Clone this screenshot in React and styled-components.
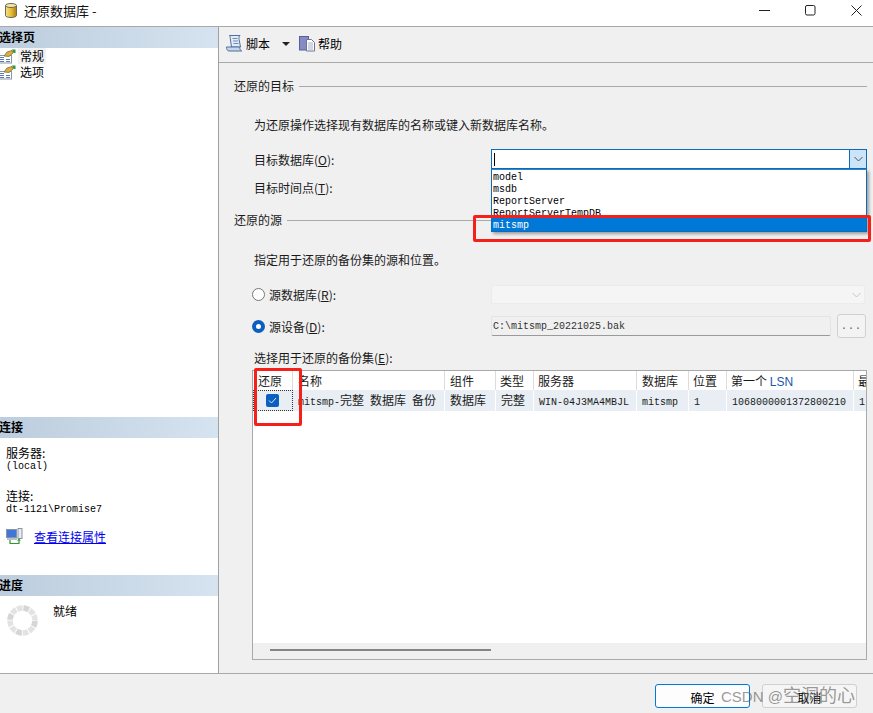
import React from "react";
import styled, { createGlobalStyle } from "styled-components";

const Global = createGlobalStyle`
  html, body { margin: 0; padding: 0; background: #f0f0f0; }
  body { font-family: "Noto Sans CJK SC", "Liberation Sans", sans-serif; font-size: 12px; color: #000; }
`;
const Win = styled.div`
  position: relative; width: 873px; height: 713px; overflow: hidden;
  display: flex; flex-direction: column; background: #f0f0f0;
`;
const TitleBar = styled.div`
  height: 27px; box-sizing: border-box; background: #fff; border-bottom: 1px solid #a9a9a9;
  display: flex; align-items: center; padding: 0 0 6px 5px; flex: none;
`;
const TitleText = styled.span`font-size: 13px; margin-left: 7px; color: #111; line-height: 16px; padding-top: 1px;`;
const WinBtns = styled.div`
  margin-left: auto; display: flex; align-items: center; gap: 35px; padding-right: 11px;
`;
const Main = styled.div`flex: 1; display: flex; min-height: 0;`;
const Side = styled.aside`
  width: 219px; box-sizing: border-box; flex: none; background: #fff; border-right: 1px solid #a0a0a0;
  display: flex; flex-direction: column;
`;
const SideHead = styled.div`
  height: 21px; flex: none; background: linear-gradient(90deg, #bccddd, #d6e3f0);
  font-weight: 700; font-size: 12px; line-height: 19px; text-indent: -1px;
`;
const Pages = styled.div`height: 369px; box-sizing: border-box; flex: none;`;
const PageRow = styled.div`display: flex; align-items: center; height: 16px; gap: 2px; line-height: 16px;`;
const PageLabel = styled.span`padding: 0 2px; background: ${p => p.$sel ? "#f2f2f2" : "transparent"};`;
const ConnBody = styled.div`height: 137px; box-sizing: border-box; flex: none; padding: 8px 0 0 6px; display: flex; flex-direction: column;`;
const Label = styled.div`height: 13px; line-height: 13px;`;
const MonoLabel = styled.div`height: 13px; line-height: 15px; font-family: "Liberation Mono", monospace; font-size: 10px;`;
const Mono = styled.span`font-family: "Liberation Mono", monospace; font-size: 10px;`;
const ConnBlock = styled.div`display: flex; flex-direction: column; height: 26px; margin-bottom: ${p => p.$mb}px;`;
const LinkRow = styled.div`display: flex; align-items: center; gap: 11px;`;
const Link = styled.a`color: #0000ee; text-decoration: underline; font-size: 12px;`;
const ProgressBody = styled.div`flex: 1; display: flex; padding: 6px 0 0 7px; gap: 15px;`;
const SpinnerBox = styled.div`margin-top: 3px; height: 31px;`;

const Content = styled.div`flex: 1; min-width: 0; display: flex; flex-direction: column;`;
const Toolbar = styled.div`
  height: 36px; box-sizing: border-box; flex: none; border-bottom: 1px solid #a9a9a9; display: flex; align-items: center; padding: 0 0 3px 7px;
`;
const ToolItem = styled.div`display: flex; align-items: center; gap: 3px;`;
const Caret = styled.span`
  width: 0; height: 0; border-left: 4px solid transparent; border-right: 4px solid transparent;
  border-top: 4px solid #222; margin: 2px 9px 0 12px;
`;
const Form = styled.div`flex: 1; padding: 14px 6px 0 15px; display: flex; flex-direction: column; min-height: 0;`;
const Section = styled.div`display: flex; align-items: center; gap: 5px; height: 18px; color: #1a1a1a; margin-top: ${p => p.$mt || 0}px;`;
const SectionTitle = styled.span`margin-bottom: 2px;`;
const Rule = styled.div`flex: 1; height: 1px; background: #a9a9a9;`;
const Desc = styled.div`margin: ${p => p.$mt}px 0 0 20px; height: 16px; line-height: 16px; color: #1a1a1a;`;
const FormRow = styled.div`
  display: flex; align-items: center; height: ${p => p.$h}px; margin-top: ${p => p.$mt}px; padding-left: 20px;
`;
const FieldLabel = styled.div`width: 237px; flex: none; color: #1a1a1a;`;
const RadioLabel = styled.div`
  width: 239px; flex: none; display: flex; align-items: center; gap: 4px; color: #1a1a1a; margin-left: -2px;
`;
const Radio = styled.span`
  width: 13px; height: 13px; border-radius: 50%; box-sizing: border-box; flex: none; background: #fff;
  border: ${p => p.$on ? "4px solid #0a5fc0" : "1px solid #777"};
`;
const ComboWrap = styled.div`position: relative; flex: 1; height: 20px;`;
const Combo = styled.div`
  height: 20px; box-sizing: border-box; border: 1px solid #0d6cb8; background: #fff; display: flex;
`;
const CaretLine = styled.span`width: 1px; height: 13px; background: #000; margin: 3px 0 0 2px;`;
const ComboBtn = styled.span`
  margin-left: auto; width: 16px; background: #cce4f7; border-left: 1px solid #0d6cb8;
  display: flex; align-items: center; justify-content: center;
`;
const DropList = styled.div`
  position: absolute; left: 0; right: 0; top: 20px; height: 63px; box-sizing: border-box; z-index: 3; background: #fff; padding-top: 2px;
  border: 1px solid #0d6cb8; border-top: 1px solid #2f86cc; box-shadow: 2px 2px 3px rgba(0,0,0,.35); overflow: hidden;
`;
const DropItem = styled.div`
  height: 12px; line-height: 12px; padding-left: 1px; font-family: "Liberation Mono", monospace; font-size: 10px; color: #000;
`;
const DropSel = styled.div`
  position: absolute; left: 0; right: 0; bottom: 0; height: 13px; line-height: 15px; padding-left: 1px;
  background: #0078d7; color: #fff; font-family: "Liberation Mono", monospace; font-size: 10px;
`;
const DisabledSelect = styled.div`
  width: 374px; height: 19px; box-sizing: border-box; background: #f5f5f5; border: 1px solid #ececec; border-radius: 2px;
  display: flex; align-items: center; justify-content: flex-end; padding-right: 3px;
`;
const PathInput = styled.div`
  width: 340px; height: 20px; box-sizing: border-box; background: #f0f0f0; border: 1px solid #e4e4e4; border-bottom: 1px solid #9a9a9a;
  border-radius: 2px; padding-left: 1px; line-height: 19px; font-family: "Liberation Mono", monospace; font-size: 10px; color: #333;
`;
const DotsBtn = styled.div`
  width: 29px; height: 24px; box-sizing: border-box; margin-left: 6px; background: #f3f3f3; border: 1px solid #d0d0d0; border-radius: 3px;
  text-align: center; font-size: 10px; line-height: 24px; font-family: "Liberation Mono", monospace; letter-spacing: 1px; white-space: nowrap; color: #555;
`;
const GridBox = styled.div`
  margin-top: 4px; margin-left: 18px; width: 615px; height: 290px; box-sizing: border-box; border: 1px solid #a9a9a9; background: #fff;
  display: flex; flex-direction: column; overflow: hidden;
`;
const GridRow = styled.div`
  display: grid; grid-template-columns: 40px 152px 51px 38px 103px 52px 38px 127px 20px; flex: none;
  height: ${p => p.$h}px; background: ${p => p.$bg || "#fff"};
`;
const HCell = styled.div`
  border-right: 1px solid #dcdcdc; padding-left: ${p => p.$pl ?? 5}px; line-height: 19px; white-space: nowrap; overflow: hidden; color: #1a1a1a;
`;
const Lsn = styled.span`color: #1a56b0; font-family: "Liberation Sans", sans-serif;`;
const Cell = styled.div`
  padding-left: 5px; line-height: 20px; white-space: nowrap; overflow: hidden; color: #1a1a1a; border-right: 1px solid #fff;
`;
const CheckCell = styled.div`
  display: flex; align-items: center; justify-content: center; padding-right: 1px; outline: 1px dotted #333; outline-offset: -1px;
`;
const Check = styled.span`
  width: 13px; height: 13px; background: #0a5fc0; border-radius: 2px; display: flex; align-items: center; justify-content: center;
`;
const GridBody = styled.div`flex: 1;`;
const ScrollTrack = styled.div`
  height: 16px; flex: none; background: #f0f0f0; padding: 6px 0 0 17px; box-sizing: border-box;
`;
const ScrollThumb = styled.div`width: 221px; height: 2px; background: #858585;`;
const Footer = styled.div`
  height: 40px; box-sizing: border-box; flex: none; border-top: 1px solid #a9a9a9; display: flex; align-items: flex-start; padding: 10px 16px 0 0;
  justify-content: flex-end; gap: 12px;
`;
const Btn = styled.div`
  width: 95px; height: 24px; box-sizing: border-box; border-radius: 3px; text-align: center; line-height: 25px; background: ${p => p.$primary ? "#fdfdfd" : "#f5f5f5"};
  border: 1px solid ${p => p.$primary ? "#0078d7" : "#d0d0d0"};
`;
const RedBox = styled.div`
  position: absolute; left: ${p => p.$x}px; top: ${p => p.$y}px; width: ${p => p.$w}px; height: ${p => p.$h}px;
  box-sizing: border-box; border: 3px solid #f6201a; border-radius: 2px; z-index: 5;
`;
const Watermark = styled.div`
  position: absolute; left: 721px; top: 683px; font-family: "Liberation Sans", "Noto Sans CJK SC", sans-serif; font-size: 15px; line-height: 22px;
  color: rgba(90,90,90,.62); z-index: 6; white-space: nowrap;
`;
const WatermarkCjk = styled.span`font-family: "Noto Sans CJK SC", sans-serif; font-size: 18px;`;

const DbIcon = () => (
  <svg width="12" height="15" viewBox="0 0 12 15">
    <defs><linearGradient id="db" x1="0" x2="1"><stop offset="0" stopColor="#f7e08a"/><stop offset=".5" stopColor="#e8bd3a"/><stop offset="1" stopColor="#a97f14"/></linearGradient></defs>
    <path d="M.5 2.500v10c0 1.100 2.400 2 5.500 2s5.500-.9 5.500-2v-10z" fill="url(#db)" stroke="#6f6a55"/>
    <ellipse cx="6" cy="2.500" rx="5.500" ry="2" fill="#f4e6a8" stroke="#6f6a55"/>
  </svg>
);
const PageIcon = () => (
  <svg width="16" height="15" viewBox="0 0 16 15">
    <rect x="-2" y="6.500" width="13.500" height="7.500" fill="#fff" stroke="#8a97ab"/>
    <path d="M0 8.500h4M0 10.500h4M0 12.500h4M6 10.500h4M6 12.500h4" stroke="#5b7bb5"/>
    <path d="M4 7l3-4 5-1.500 1 2.500-4 3.500z" fill="#dcae3c" stroke="#77622a" strokeWidth=".7"/>
    <path d="M12 .5h3.500v3.500h-2z" fill="#2f9a3a"/>
  </svg>
);
const ScriptIcon = () => (
  <svg width="17" height="17" viewBox="0 0 17 17">
    <path d="M3.500.5H14c-1 1-1.200 2.200-.9 4l1.400 7.500H5.500L4.500 5C4.300 3 4.200 1.500 3.500.5z" fill="#e3ebf6" stroke="#4f6f9f"/>
    <path d="M.5 12h13.200c0 1.800.6 3.200 2 4H3C1.300 16 .5 14 .5 12z" fill="#c8d6ea" stroke="#4f6f9f"/>
    <path d="M6.500 3.500h5M7 6h5M7.500 8.500h5" stroke="#6f8cb8"/>
  </svg>
);
const HelpIcon = () => (
  <svg width="16" height="17" viewBox="0 0 16 17">
    <rect x=".5" y="1.500" width="9" height="13.500" fill="#868bc6" stroke="#5a5f96"/>
    <path d="M7.500 4.500h5l3 3v8.500h-8z" fill="#fff" stroke="#6f7390"/>
    <path d="M9 8h5M9 10h5M9 12h5M9 14h5" stroke="#a8acc4"/>
  </svg>
);
const ConnIcon = () => (
  <svg width="17" height="17" viewBox="0 0 17 17">
    <rect x="0.500" y="1.500" width="10" height="8" fill="#3f76d8" stroke="#8a93a8"/>
    <rect x="1" y="10" width="10" height="2" fill="#b9c0cc"/>
    <rect x="12" y="0.500" width="4" height="10" fill="#e8ebf0" stroke="#8a93a8"/>
    <path d="M4 12v3.500h9V12" fill="none" stroke="#2d9a2d" strokeWidth="1.200"/>
    <path d="M11 12.500l2-2 2 2z" fill="#2d9a2d"/>
  </svg>
);
const Spinner = () => (
  <svg width="31" height="31" viewBox="0 0 31 31" fill="none">
    <g transform="rotate(3 15.500 15.500)">
      <circle cx="15.500" cy="15.500" r="12.500" stroke="#e3e3e3" strokeWidth="5.500" strokeDasharray="5.500 1.045" />
      <circle cx="15.500" cy="15.500" r="12.500" stroke="#d6d6d6" strokeWidth="5.500" strokeDasharray="5.500 14.135" />
    </g>
  </svg>
);
const Chevron = ({ color = "#555" }) => (
  <svg width="9" height="6" viewBox="0 0 9 6"><path d="M.5 1l4 4 4-4" fill="none" stroke={color}/></svg>
);

export default function App() {
  return (
    <Win>
      <Global />
      <TitleBar>
        <DbIcon />
        <TitleText>还原数据库 -</TitleText>
        <WinBtns>
          <svg width="11" height="11" viewBox="0 0 11 11"><path d="M0 5.500h11" stroke="#222"/></svg>
          <svg width="11" height="11" viewBox="0 0 11 11"><rect x=".5" y=".5" width="9.500" height="9.500" rx="1.500" fill="none" stroke="#222"/></svg>
          <svg width="11" height="11" viewBox="0 0 11 11"><path d="M.5.5l10 10M10.500.5l-10 10" stroke="#222"/></svg>
        </WinBtns>
      </TitleBar>
      <Main>
        <Side>
          <SideHead>选择页</SideHead>
          <Pages>
            <PageRow><PageIcon /><PageLabel $sel>常规</PageLabel></PageRow>
            <PageRow><PageIcon /><PageLabel>选项</PageLabel></PageRow>
          </Pages>
          <SideHead>连接</SideHead>
          <ConnBody>
            <ConnBlock $mb={17}>
              <Label>服务器:</Label>
              <MonoLabel>(local)</MonoLabel>
            </ConnBlock>
            <ConnBlock $mb={13}>
              <Label>连接:</Label>
              <MonoLabel>dt-1121\Promise7</MonoLabel>
            </ConnBlock>
            <LinkRow><ConnIcon /><Link>查看连接属性</Link></LinkRow>
          </ConnBody>
          <SideHead>进度</SideHead>
          <ProgressBody>
            <SpinnerBox><Spinner /></SpinnerBox>
            <span>就绪</span>
          </ProgressBody>
        </Side>
        <Content>
          <Toolbar>
            <ToolItem><ScriptIcon /><span>脚本</span></ToolItem>
            <Caret />
            <ToolItem><HelpIcon /><span>帮助</span></ToolItem>
          </Toolbar>
          <Form>
            <Section><SectionTitle>还原的目标</SectionTitle><Rule /></Section>
            <Desc $mt={22}>为还原操作选择现有数据库的名称或键入新数据库名称。</Desc>
            <FormRow $h={20} $mt={16}>
              <FieldLabel>目标数据库(<u>O</u>):</FieldLabel>
              <ComboWrap>
                <Combo>
                  <CaretLine />
                  <ComboBtn><Chevron /></ComboBtn>
                </Combo>
                <DropList>
                  <DropItem>model</DropItem>
                  <DropItem>msdb</DropItem>
                  <DropItem>ReportServer</DropItem>
                  <DropItem>ReportServerTempDB</DropItem>
                  <DropSel>mitsmp</DropSel>
                </DropList>
              </ComboWrap>
            </FormRow>
            <FormRow $h={16} $mt={10}><FieldLabel>目标时间点(<u>T</u>):</FieldLabel></FormRow>
            <Section $mt={16}><SectionTitle>还原的源</SectionTitle><Rule /></Section>
            <Desc $mt={23}>指定用于还原的备份集的源和位置。</Desc>
            <FormRow $h={19} $mt={17}>
              <RadioLabel><Radio /><span>源数据库(<u>R</u>):</span></RadioLabel>
              <DisabledSelect><Chevron color="#c4c4c4" /></DisabledSelect>
            </FormRow>
            <FormRow $h={24} $mt={10}>
              <RadioLabel><Radio $on /><span>源设备(<u>D</u>):</span></RadioLabel>
              <PathInput>C:\mitsmp_20221025.bak</PathInput>
              <DotsBtn>...</DotsBtn>
            </FormRow>
            <Desc $mt={12}>选择用于还原的备份集(<u>E</u>):</Desc>
            <GridBox>
              <GridRow $h={19}>
                <HCell>还原</HCell><HCell>名称</HCell><HCell>组件</HCell><HCell $pl={4}>类型</HCell><HCell $pl={4}>服务器</HCell>
                <HCell>数据库</HCell><HCell $pl={4}>位置</HCell><HCell $pl={4}>第一个 <Lsn>LSN</Lsn></HCell><HCell $pl={4}>最</HCell>
              </GridRow>
              <GridRow $h={21} $bg="#e8eef3">
                <CheckCell>
                  <Check><svg width="9" height="7" viewBox="0 0 9 7"><path d="M1 3.500l2.500 2.500L8 1" fill="none" stroke="#dfe9f5" strokeWidth="1"/></svg></Check>
                </CheckCell>
                <Cell><Mono>mitsmp-</Mono>完整<Mono> </Mono>数据库<Mono> </Mono>备份</Cell>
                <Cell>数据库</Cell>
                <Cell>完整</Cell>
                <Cell><Mono>WIN-04J3MA4MBJL</Mono></Cell>
                <Cell><Mono>mitsmp</Mono></Cell>
                <Cell><Mono>1</Mono></Cell>
                <Cell><Mono>1068000001372800210</Mono></Cell>
                <Cell><Mono>1</Mono></Cell>
              </GridRow>
              <GridBody />
              <ScrollTrack><ScrollThumb /></ScrollTrack>
            </GridBox>
          </Form>
        </Content>
      </Main>
      <Footer>
        <Btn $primary>确定</Btn>
        <Btn>取消</Btn>
      </Footer>
      <RedBox $x={473} $y={215} $w={398} $h={27} />
      <RedBox $x={254} $y={368} $w={48} $h={58} />
      <Watermark>CSDN @<WatermarkCjk>空洞的心</WatermarkCjk></Watermark>
    </Win>
  );
}
